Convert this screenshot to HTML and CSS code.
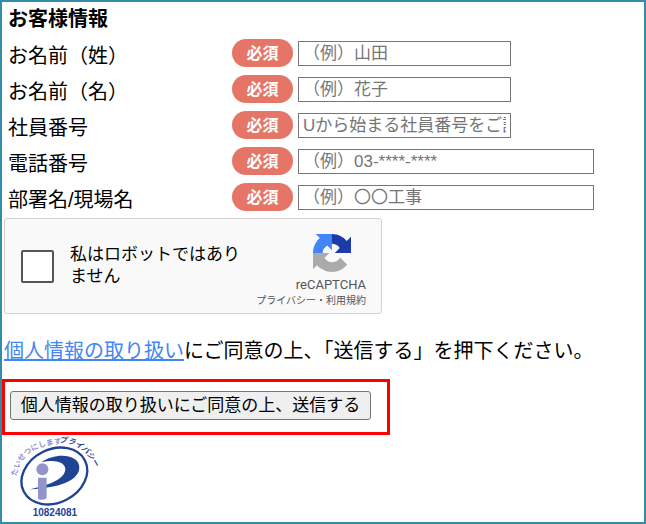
FILE: index.html
```html
<!DOCTYPE html>
<html lang="ja">
    <head>
        <meta charset="UTF-8" />
        <meta name="viewport" content="width=device-width, initial-scale=1.0" />
        <title>お客様情報</title>
        <link rel="stylesheet" href="styles.css">
    </head>

    <body>
        <form>
            <h1>お客様情報</h1>
            <div class="row">
                <label for="lastName">お名前（姓）</label>
                <span class="required">必須</span>
                <input type="text" id="lastName" placeholder="（例）山田" />
            </div>
            <div class="row">
                <label for="firstName">お名前（名）</label>
                <span class="required">必須</span>
                <input type="text" id="firstName" placeholder="（例）花子" />
            </div>
            <div class="row">
                <label for="staffNo">社員番号</label>
                <span class="required">必須</span>
                <input type="text" id="staffNo" placeholder="Uから始まる社員番号をご記入ください" />
            </div>
            <div class="row">
                <label for="tel">電話番号</label>
                <span class="required">必須</span>
                <input type="tel" id="tel" class="wide" placeholder="（例）03-****-****" />
            </div>
            <div class="row">
                <label for="dept">部署名/現場名</label>
                <span class="required">必須</span>
                <input type="text" id="dept" class="wide" placeholder="（例）〇〇工事" />
            </div>

            <div class="captcha">
                <input type="checkbox" id="robot" />
                <label for="robot">私はロボットではありません</label>
                <div class="captcha-brand">
                    <svg class="captcha-logo" viewBox="0 0 64 64" aria-hidden="true">
                        <path fill="#1c3aa9" d="M64 31.955l-.033-1.37V4.687l-7.16 7.16C50.948 4.674 42.033.093 32.05.093c-10.4 0-19.622 4.96-25.458 12.64l11.736 11.86a15.55 15.55 0 0 1 4.754-5.334c2.05-1.6 4.952-2.906 8.968-2.906.485 0 .86.057 1.135.163 4.976.393 9.288 3.14 11.828 7.124l-8.307 8.307L64 31.953" />
                        <path fill="#4285f4" d="M31.862.094l-1.37.033H4.594l7.16 7.16C4.58 13.147 0 22.06 0 32.046c0 10.4 4.96 19.622 12.64 25.458L24.5 45.768a15.55 15.55 0 0 1-5.334-4.754c-1.6-2.05-2.906-4.952-2.906-8.968 0-.485.057-.86.163-1.135.393-4.976 3.14-9.288 7.124-11.828l8.307 8.307L31.86.095" />
                        <path fill="#ababab" d="M.001 32.045l.033 1.37v25.898l7.16-7.16c5.86 7.173 14.774 11.754 24.76 11.754 10.4 0 19.622-4.96 25.458-12.64l-11.736-11.86a15.55 15.55 0 0 1-4.754 5.334c-2.05 1.6-4.952 2.906-8.968 2.906-.485 0-.86-.057-1.135-.163-4.976-.393-9.288-3.14-11.828-7.124l8.307-8.307c-10.522.04-22.4.066-27.295-.005" />
                    </svg>
                    <div class="captcha-name">reCAPTCHA</div>
                    <div class="captcha-links">
                        <a href="#">プライバシー</a>・<a href="#">利用規約</a>
                    </div>
                </div>
            </div>

            <p><a href="#">個人情報の取り扱い</a>にご同意の上、「送信する」を押下ください。</p>

            <div class="submit-area">
                <button type="submit">個人情報の取り扱いにご同意の上、送信する</button>
            </div>

            <!-- プライバシーマーク -->
            <svg class="pmark" viewBox="30 15 270 255" role="img" aria-label="プライバシーマーク">
                <defs>
                    <path id="arcLeft" d="M50 140 Q62 50 180 42" />
                    <path id="arcRight" d="M178 38 Q246 36 284 110" />
                </defs>
                <text class="pmark-left"><textPath href="#arcLeft">たいせつにします</textPath></text>
                <text class="pmark-right"><textPath href="#arcRight">プライバシー</textPath></text>
                <ellipse cx="163" cy="138" rx="103" ry="80" transform="rotate(-27 163 138)" fill="none" stroke="#1f4496" stroke-width="7" />
                <path fill="#1f4496" d="M124 97 C166 66 238 72 238 112 C238 152 178 174 90 178 C142 166 194 150 196 118 C196 94 160 88 124 97 Z" />
                <circle cx="127" cy="118" r="21" fill="#fff" />
                <circle cx="127" cy="118" r="18" fill="#9494cc" />
                <path fill="#9494cc" d="M114 143 h26 v61 q-12 10 -26 2 Z" />
                <text class="pmark-number" x="98" y="259">10824081</text>
            </svg>
        </form>
    </body>
</html>
```
FILE: styles.css
```css
* {
    margin: 0;
    padding: 0;
    box-sizing: border-box;
}

body {
    min-height: 100vh;
    border: 2px solid #338ca8;
    background-color: #fff;
    color: #000;
    font-family: 'Liberation Sans', 'Noto Sans CJK JP', sans-serif;
    font-size: 20px;
    line-height: 30px;
}

h1 {
    padding: 2px 6px 1px;
    font-size: 20px;
}

.row {
    display: grid;
    grid-template-columns: 224px 61px 1fr;
    align-items: center;
    height: 36px;
    padding-left: 6px;
}

.row label {
    padding-top: 5px;
}

.required {
    height: 28px;
    border-radius: 14px;
    background-color: #e57667;
    color: #fff;
    font-size: 16px;
    font-weight: bold;
    line-height: 29px;
    text-align: center;
}

.row input {
    width: 213px;
    height: 25px;
    margin-left: 5px;
    padding: 2px 4px 0;
    border: 1px solid #767676;
    background-color: #fff;
    font-family: inherit;
    font-size: 17px;
}

.row .wide {
    width: 296px;
}

.row input::placeholder {
    color: #757575;
}

.captcha {
    display: flex;
    align-items: center;
    width: 378px;
    height: 96px;
    margin: 3px 2px 0;
    padding: 0 15px 0 16px;
    border: 1px solid #d3d3d3;
    border-radius: 3px;
    background-color: #f9f9f9;
}

.captcha input {
    appearance: none;
    width: 33px;
    height: 33px;
    margin-right: 16px;
    border: 2px solid #555;
    border-radius: 2px;
    background-color: #fff;
}

.captcha label {
    width: 176px;
    font-size: 17px;
    line-height: 22px;
}

.captcha-brand {
    flex: 1;
    padding-top: 10px;
    color: #555;
    text-align: right;
    white-space: nowrap;
}

.captcha-logo {
    display: block;
    width: 38px;
    height: 38px;
    margin: 0 15px 5px auto;
}

.captcha-name {
    font-family: Roboto, sans-serif;
    font-size: 13px;
    line-height: 16px;
}

.captcha-links {
    display: flex;
    justify-content: flex-end;
    font-size: 10px;
    line-height: 16px;
}

.captcha-links a {
    color: #555;
    text-decoration: none;
}

p {
    margin: 22px 2px 13px;
}

p a {
    color: #4285f4;
}

.submit-area {
    width: 388px;
    padding: 9px 5px 12px;
    border: 3px solid #f00;
    line-height: 0;
}

button {
    width: 361px;
    height: 29px;
    border: 1px solid #767676;
    border-radius: 3px;
    background-color: #efefef;
    color: #000;
    font-family: inherit;
    font-size: 17px;
    line-height: 27px;
}

.pmark {
    display: block;
    width: 90px;
    height: 85px;
    margin-left: 8px;
    overflow: visible;
}

.pmark-left {
    fill: #9494cc;
    font-size: 23px;
    font-weight: bold;
}

.pmark-right {
    fill: #1f4496;
    font-size: 23px;
    font-style: italic;
    font-weight: bold;
}

.pmark-number {
    fill: #1f4496;
    font-size: 30px;
    font-weight: bold;
}
```
